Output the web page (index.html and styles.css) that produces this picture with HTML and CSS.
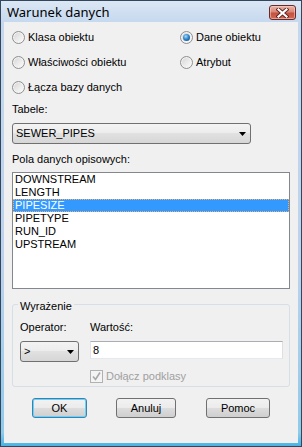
FILE: index.html
```html
<!DOCTYPE html>
<html lang="pl">
<head>
<meta charset="utf-8">
<title>Warunek danych</title>
<link rel="stylesheet" href="styles.css">
</head>
<body>
<div class="window">
  <div class="titlebar">
    <span class="title">Warunek danych</span>
    <div class="close">
      <svg width="13" height="10" viewBox="0 0 13 10">
        <path d="M2.5 1.5 L10.5 8.5 M10.5 1.5 L2.5 8.5" stroke="#5a2222" stroke-width="4" stroke-linecap="square" fill="none"/>
        <path d="M2.5 1.5 L10.5 8.5 M10.5 1.5 L2.5 8.5" stroke="#ffffff" stroke-width="2.2" stroke-linecap="square" fill="none"/>
      </svg>
    </div>
  </div>
  <div class="client">
    <div class="radios">
      <label class="radio"><span class="rb"></span>Klasa obiektu</label>
      <label class="radio"><span class="rb rb-on"></span>Dane obiektu</label>
      <label class="radio"><span class="rb"></span>Właściwości obiektu</label>
      <label class="radio"><span class="rb"></span>Atrybut</label>
      <label class="radio"><span class="rb"></span>Łącza bazy danych</label>
    </div>
    <div class="label lbl-tabele">Tabele:</div>
    <div class="combo combo-tabele">
      <span class="combo-text">SEWER_PIPES</span>
      <svg class="arrow" width="7" height="4" viewBox="0 0 7 4"><polygon points="0,0 7,0 3.5,4" fill="#000"/></svg>
    </div>
    <div class="label lbl-pola">Pola danych opisowych:</div>
    <div class="listbox">
      <div class="item">DOWNSTREAM</div>
      <div class="item">LENGTH</div>
      <div class="item item-sel">PIPESIZE</div>
      <div class="item">PIPETYPE</div>
      <div class="item">RUN_ID</div>
      <div class="item">UPSTREAM</div>
    </div>
    <fieldset class="group">
      <legend class="legend">Wyrażenie</legend>
      <div class="expr">
        <div class="col-op">
          <div class="label">Operator:</div>
          <div class="combo combo-op">
            <span class="combo-text">&gt;</span>
            <svg class="arrow" width="7" height="4" viewBox="0 0 7 4"><polygon points="0,0 7,0 3.5,4" fill="#000"/></svg>
          </div>
        </div>
        <div class="col-val">
          <div class="label">Wartość:</div>
          <div class="input">8</div>
          <div class="check">
            <span class="cb">
              <svg width="11" height="11" viewBox="0 0 11 11"><path d="M2 5.5 L4.5 8.5 L9 1.5" stroke="#a8a8a8" stroke-width="1.6" fill="none"/></svg>
            </span>
            <span class="check-text">Dołącz podklasy</span>
          </div>
        </div>
      </div>
    </fieldset>
    <div class="buttons">
      <div class="btn btn-ok">OK</div>
      <div class="btn btn-cancel">Anuluj</div>
      <div class="btn btn-help">Pomoc</div>
    </div>
  </div>
</div>
</body>
</html>
```

FILE: styles.css
```css
* { box-sizing: border-box; }
html, body { margin: 0; padding: 0; }
body {
  width: 302px;
  height: 447px;
  overflow: hidden;
  font-family: "Liberation Sans", Arial, sans-serif;
  font-size: 11px;
  line-height: 13px;
  color: #000;
  background: #fff;
}
.window {
  width: 302px;
  height: 447px;
  border: 1px solid #34465c;
  background: linear-gradient(180deg, #dbe7f4 0px, #c5d8ee 22px, #bcd2ec 60%, #8fcbea 97%, #45b4e4 100%);
  display: flex;
  flex-direction: column;
}
.titlebar {
  height: 21px;
  display: flex;
  align-items: flex-start;
  padding-left: 6px;
}
.title {
  font-family: "Noto Sans", "Open Sans", sans-serif;
  font-size: 13px;
  line-height: 16px;
  margin-top: 3px;
  color: #000;
}
.close {
  margin-left: auto;
  margin-right: 5px;
  margin-top: 4px;
  width: 27px;
  height: 15px;
  border: 1px solid #6b2a2a;
  border-radius: 3px;
  background: linear-gradient(180deg, #eab3a4 0%, #d98878 45%, #c5503f 55%, #cf6a54 100%);
  box-shadow: inset 0 0 0 1px rgba(255, 220, 210, 0.5);
  display: flex;
  align-items: center;
  justify-content: center;
}
.client {
  flex: 1;
  margin: 0 3px 3px 3px;
  background: #f0f0f0;
  padding: 3px 8px 0 8px;
  display: flex;
  flex-direction: column;
}
.radios {
  display: grid;
  grid-template-columns: 168px 1fr;
  grid-auto-rows: 25px;
}
.radio {
  display: flex;
  align-items: center;
  gap: 3px;
}
.rb {
  width: 13px;
  height: 13px;
  border-radius: 50%;
  border: 1px solid #8e8f8f;
  background: linear-gradient(135deg, #d3d3d3 0%, #ececec 55%, #fdfdfd 100%);
  box-shadow: inset 0 0 0 1px #f4f4f4;
  position: relative;
  flex: none;
}
.rb-on::after {
  content: "";
  position: absolute;
  left: 2px;
  top: 2px;
  width: 7px;
  height: 7px;
  border-radius: 50%;
  background: radial-gradient(circle at 40% 35%, #a9dcfa 0%, #2f86cf 45%, #0c3f73 100%);
}
.lbl-tabele { margin-top: 3px; }
.combo {
  height: 21px;
  border: 1px solid #707070;
  border-radius: 3px;
  background: linear-gradient(180deg, #f3f3f3 0%, #ececec 50%, #e1e1e1 50%, #d6d6d6 100%);
  display: flex;
  align-items: center;
  padding-left: 3px;
  padding-right: 4px;
}
.combo-text { flex: 1; }
.combo-tabele {
  margin-top: 7px;
  width: 239px;
}
.lbl-pola { margin-top: 9px; }
.listbox {
  margin-top: 6px;
  height: 117px;
  border: 1px solid #828790;
  background: #fff;
  padding: 0;
}
.item {
  height: 13px;
  padding-left: 2px;
}
.item-sel {
  background: #3399ff;
  color: #fff;
  outline: 1px dotted #e8b070;
  outline-offset: -1px;
}
.group {
  margin: 7px 0 0 0;
  border: 1px solid #d5dfe5;
  border-radius: 3px;
  padding: 8px 7px 3px 7px;
  min-width: 0;
}
.legend {
  padding: 4px 2px 0 2px;
  margin-left: -2px;
}
.expr {
  display: flex;
  gap: 11px;
}
.col-op { width: 59px; }
.col-val { flex: 1; padding-right: 0; }
.combo-op {
  margin-top: 7px;
  width: 59px;
}
.input {
  margin-top: 7px;
  width: 193px;
  height: 18px;
  background: #fff;
  border: 1px solid;
  border-color: #abadb3 #dbdfe6 #e3e9ef #e2e3ea;
  padding-left: 2px;
  display: flex;
  align-items: center;
}
.check {
  margin-top: 11px;
  display: flex;
  align-items: center;
  gap: 3px;
  height: 13px;
}
.cb {
  width: 13px;
  height: 13px;
  border: 1px solid #b1b1b1;
  background: #f4f4f4;
  display: flex;
  align-items: center;
  justify-content: center;
}
.check-text { color: #a0a0a0; }
.buttons {
  margin-top: 11px;
  padding-left: 20px;
  display: flex;
}
.btn {
  height: 20px;
  border: 1px solid #707070;
  border-radius: 3px;
  background: linear-gradient(180deg, #f2f2f2 0%, #ebebeb 50%, #dddddd 50%, #cfcfcf 100%);
  display: flex;
  align-items: center;
  justify-content: center;
}
.btn-ok {
  width: 55px;
  border-color: #3c7fb1;
  box-shadow: inset 0 0 0 1px #66d3f7;
}
.btn-cancel { width: 60px; margin-left: 29px; }
.btn-help { width: 64px; margin-left: 30px; }
```
